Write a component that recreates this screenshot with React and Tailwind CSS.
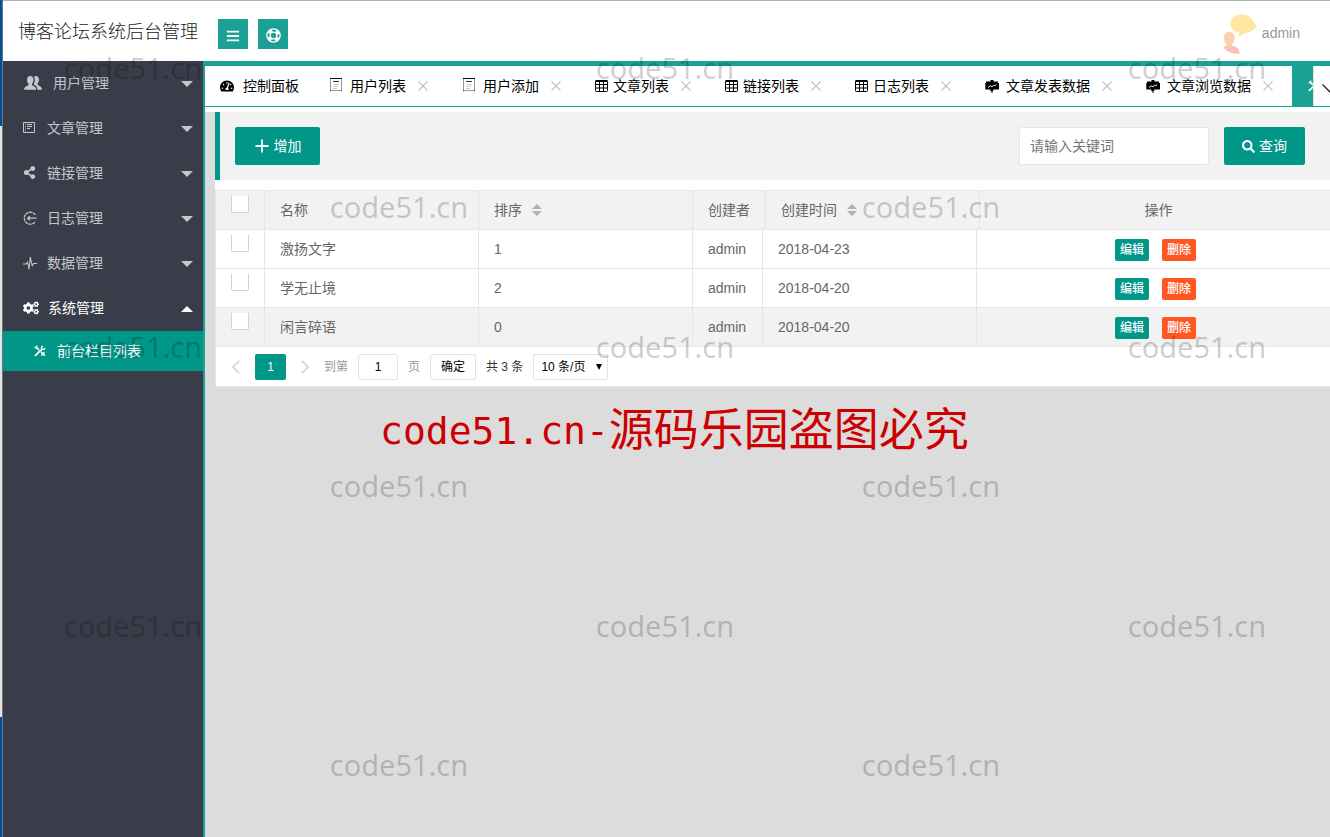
import React from "react";
import { FaBars, FaCogs, FaSearch, FaShareAlt, FaTachometerAlt } from "react-icons/fa";

const UsersIcon = () => (
  <svg viewBox="0 0 18 14" className="h-[14px] w-[18px]" fill="currentColor">
    <path d="M6.300 0C8.400 0 9.500 1.500 9.500 3.700c0 1.700-.6 3.100-1.500 4v1.200c.4.9 4.300 1.300 4.300 4.900H0c0-3.600 4.100-4 4.500-4.900V7.700C3.600 6.800 3 5.400 3 3.700 3 1.500 4.200 0 6.300 0z" />
    <path d="M10 .6C10.600.2 11.200 0 11.900 0c2 0 3.100 1.500 3.100 3.600 0 1.700-.5 3-1.400 3.900v1.300c.4.900 4.400 1.300 4.400 4.900h-4.600c0-2.700-1.500-4-3.400-4.900l-.1-.8c.5-1 .9-2.400.9-4C10.800 2.700 10.600 1.600 10 .6z" />
  </svg>
);

const RingIcon = () => (
  <svg viewBox="0 0 14 14" className="mt-[3px] h-[15px] w-[15px]" fill="none" stroke="currentColor">
    <circle cx="7" cy="7" r="6.200" strokeWidth="1.200" />
    <circle cx="7" cy="7" r="3.200" strokeWidth="1.200" />
    <circle cx="7" cy="7" r="4.700" strokeWidth="3" strokeDasharray="3.700 3.680" strokeDashoffset="-1.840" />
  </svg>
);

const DocIcon = () => (
  <svg viewBox="0 0 13 13" className="h-[13px] w-[13px]" fill="none" stroke="currentColor" strokeWidth="1">
    <path d="M.5 1.500h11v10h-11z" />
    <path d="M4 3.500h5M4 5.500h5M4 7.500h3" />
    <path d="M2.500 2v9" strokeOpacity=".4" />
  </svg>
);

const TabDocIcon = () => (
  <svg viewBox="0 0 14 14" className="mb-[2px] h-[14px] w-[14px]" fill="none" stroke="currentColor" strokeWidth="1">
    <path d="M1.500 1v12.500M12.500 1v12.500M1 12.500h12" strokeOpacity=".4" />
    <path d="M1 .5h12" strokeOpacity=".95" />
    <path d="M4 3.500h6" strokeOpacity=".8" />
    <path d="M5 6.500h5M4 8.500h5M4 10.500h4" strokeOpacity=".2" />
  </svg>
);

const LogIcon = () => (
  <svg viewBox="0 0 14 14" className="h-[14px] w-[14px]" fill="none" stroke="currentColor" strokeWidth="1.300">
    <path d="M12.300 3.800A6 6 0 1 0 12.300 10.500" strokeDasharray="3 .7" />
    <path d="M4.500 7.200h9M6.800 5.200L4.600 7.200L6.800 9.200" />
  </svg>
);

const PulseIcon = () => (
  <svg viewBox="0 0 14 14" className="h-[14px] w-[14px]" fill="none" stroke="currentColor" strokeWidth="1.100" strokeLinejoin="round">
    <path d="M0 8h3l1.500-2L6 13L7.300 1.200L9.200 10l1.200-2.500H14" />
  </svg>
);

const ToolsIcon = () => (
  <svg viewBox="0 0 12 12" className="h-[12px] w-[12px]" fill="none" stroke="currentColor" strokeWidth="1.700">
    <path d="M2.500 2.500L5 4.800M7 6.800l3.800 3.800M1 10.800L8.200 3.800" />
    <path d="M8.800.8L7.500 2.500l.4 1.700 1.700.3L11.300 3.200" strokeWidth="1.300" />
    <path d="M.7 3.300L3.300.7M7.300 10.500L10.500 7.300" strokeWidth="1.300" />
  </svg>
);

const GridIcon = () => (
  <svg viewBox="0 0 13 12" className="h-[12px] w-[13px]" fill="none" stroke="currentColor" strokeWidth="1">
    <rect x=".5" y="1" width="12" height="10.500" rx=".8" />
    <path d="M.5 1h12" strokeWidth="2" />
    <path d="M.5 4.500h12M.5 8h12M4.500 1v10.500M8.500 1v10.500" />
  </svg>
);

const BoardIcon = () => (
  <svg viewBox="0 0 14 13" className="h-[13px] w-[14px]">
    <path d="M5.500 0h3v1.500H13V3h1v6.500H8l.6 1.500H7.500v2h-1v-2H5l.6-1.500H.3V3H1V1.500h4.500z" fill="currentColor" />
    <path d="M3 7.500l2.500-1.700L7 6.800 9 5l.8.8L11.300 4.500" fill="none" stroke="#fff" strokeWidth=".9" />
  </svg>
);

const CloseIcon = () => (
  <svg viewBox="0 0 10 10" className="h-[10px] w-[10px]" fill="none" stroke="currentColor" strokeWidth="1.100">
    <path d="M.5.5l9 9M9.500.5l-9 9" />
  </svg>
);

const SortIcon = () => (
  <svg viewBox="0 0 10 12" className="h-[12px] w-[10px]" fill="#b2b2b2">
    <path d="M0 5L5 0l5 5zM0 7h10l-5 5z" />
  </svg>
);

const Avatar = () => (
  <svg viewBox="0 0 34 40" className="h-[40px] w-[34px]">
    <path d="M19 .2C26 .2 31 6 33.800 13c-4 4-8 5.800-12.500 6.200-1.500 1.500-4 3-7 3.500 1.200-1.200 2-2.600 2-4.200C10.500 17.500 7.300 14 7.300 9.800 7.300 4.500 12 .2 19 .2z" fill="#ffe7a3" />
    <path d="M6.300 17.700c3.400 0 5.200 2.600 5.200 6 0 2.800-1 4.800-2.200 6.300v4l-3 1.500-3-1.500v-4C2 28.500.9 26.500.9 23.700c0-3.400 2-6 5.400-6z" fill="#fdd0ac" />
    <path d="M0 32.800c1 .1 2.300-.3 3.300-.8 1.500 2 4 2 6 0 4.500.2 7 2.500 7.300 8C9 40 3.500 38 0 32.800z" fill="#fbc0ba" />
  </svg>
);

const menu = [
  { label: "用户管理", icon: <UsersIcon />, wide: true },
  { label: "文章管理", icon: <DocIcon /> },
  { label: "链接管理", icon: <FaShareAlt size={13} /> },
  { label: "日志管理", icon: <LogIcon /> },
  { label: "数据管理", icon: <PulseIcon /> },
];

const tabs = [
  { label: "用户列表", icon: <TabDocIcon />, wide: true },
  { label: "用户添加", icon: <TabDocIcon />, wide: true },
  { label: "文章列表", icon: <GridIcon /> },
  { label: "链接列表", icon: <GridIcon /> },
  { label: "日志列表", icon: <GridIcon /> },
  { label: "文章发表数据", icon: <BoardIcon />, wide: true },
  { label: "文章浏览数据", icon: <BoardIcon />, wide: true },
];

const rows = [
  { name: "激扬文字", order: 1, date: "2018-04-23" },
  { name: "学无止境", order: 2, date: "2018-04-20" },
  { name: "闲言碎语", order: 0, date: "2018-04-20" },
];

const cell = "border-r border-b border-[#e6e6e6] px-[15px] text-left font-normal";

const Check = ({ label }) => (
  <input
    type="checkbox"
    aria-label={label}
    className="mt-[5px] block h-[17px] w-[18px] appearance-none rounded-b-xs border border-t-0 border-[#d2d2d2] bg-white checked:bg-[#009688]"
  />
);

function Header() {
  return (
    <header className="flex h-[61px] items-center border-t border-[#b0b0b0] bg-white pl-[15px]">
      <h1 className="pt-[2px] text-[18px] font-light text-[#222]">博客论坛系统后台管理</h1>
      <div className="flex gap-[10px] pt-[6px] pl-5">
        <button aria-label="菜单" className="flex h-[30px] w-[30px] items-center justify-center bg-[#1aa094] text-white">
          <FaBars size={14} className="mt-[3px]" />
        </button>
        <button aria-label="全屏" className="flex h-[30px] w-[30px] items-center justify-center bg-[#1aa094] text-white">
          <RingIcon />
        </button>
      </div>
      <a href="#user" className="mr-[30px] ml-auto flex items-center gap-[5px] pt-1 text-sm text-[#999]">
        <span className="pt-[2px]"><Avatar /></span>
        <span>admin</span>
      </a>
    </header>
  );
}

function Sidebar() {
  return (
    <nav className="w-[202px] shrink-0 border-r-2 border-[#1aa094] bg-[#393d49] text-sm text-[#c6c7ca]">
      <ul>
        {menu.map((m) => (
          <li key={m.label}>
            <button className="flex h-[45px] w-full items-center pr-[10px] pl-5">
              <span className={m.wide ? "flex w-[30px] pb-[2px] pl-px" : "flex w-6 pb-[2px]"}>{m.icon}</span>
              <span className="pb-[2px]">{m.label}</span>
              <span className="ml-auto border-x-[6px] border-t-[6px] border-x-transparent border-t-[#c6c7ca]" />
            </button>
          </li>
        ))}
        <li>
          <button className="flex h-[45px] w-full items-center pr-[10px] pl-5 text-white">
            <span className="flex w-[25px] pb-[2px]"><FaCogs size={16} /></span>
            <span className="pb-[2px]">系统管理</span>
            <span className="ml-auto border-x-[6px] border-b-[6px] border-x-transparent border-b-white" />
          </button>
          <a href="#columns" className="flex h-10 items-center bg-[#009688] pl-[31px] text-white">
            <span className="w-[23px]"><ToolsIcon /></span>
            <span>前台栏目列表</span>
          </a>
        </li>
      </ul>
    </nav>
  );
}

function TabBar() {
  return (
    <div className="flex h-[46px] border-t-[5px] border-b border-[#1aa094] bg-white text-sm text-black">
      <div className="flex min-w-0 flex-1 overflow-hidden">
        <button className="flex shrink-0 items-center px-[15px]">
          <span className="flex w-[23px]"><FaTachometerAlt size={14} /></span>
          控制面板
        </button>
        {tabs.map((t) => (
          <div key={t.label} className="flex shrink-0 items-center pr-[19px] pl-[15px]">
            <button className="flex items-center">
              <span className={t.wide ? "flex w-[21px]" : "flex w-[18px]"}>{t.icon}</span>
              {t.label}
            </button>
            <button aria-label={"关闭" + t.label} className="pl-3 text-[#c2c2c2]"><CloseIcon /></button>
          </div>
        ))}
        <button aria-label="前台栏目列表" className="flex w-[150px] shrink-0 items-center bg-[#1aa094] pl-4 text-white">
          <ToolsIcon />
        </button>
      </div>
      <button aria-label="更多标签" className="flex w-[17px] shrink-0 items-center overflow-hidden border-l border-[#e2e2e2] pt-1 pl-2">
        <svg viewBox="0 0 16 9" className="h-[9px] w-4 shrink-0" fill="none" stroke="#222" strokeWidth="1.300">
          <path d="M.5.5L8 8L15.500.5" />
        </svg>
      </button>
    </div>
  );
}

function Toolbar() {
  return (
    <div className="flex items-center border-l-[5px] border-[#009688] bg-[#f2f2f2] py-[15px] pr-[25px] pl-[15px] text-sm">
      <button className="flex h-[38px] w-[85px] items-center justify-center gap-[5px] rounded-xs bg-[#009688] pl-px text-white">
        <svg viewBox="0 0 14 14" className="h-[14px] w-[14px]" stroke="currentColor" strokeWidth="1.800">
          <path d="M7 .5v13M.5 7h13" />
        </svg>
        增加
      </button>
      <input
        aria-label="关键词"
        placeholder="请输入关键词"
        className="ml-auto h-[38px] w-[190px] rounded-xs border border-[#e6e6e6] bg-white px-[10px] placeholder:text-[#757575]"
      />
      <button className="ml-[15px] flex h-[38px] w-[81px] items-center justify-center gap-1 rounded-xs bg-[#009688] text-white">
        <FaSearch size={13} />
        查询
      </button>
    </div>
  );
}

function DataTable() {
  return (
    <div className="overflow-hidden border-t border-l border-[#e6e6e6] text-sm text-[#666]">
      <table className="w-[calc(100%+7px)] table-fixed border-separate border-spacing-0 bg-[#f2f2f2]">
        <thead>
          <tr className="h-[39px]">
            <th className={cell + " w-[49px] align-top"}><Check label="全选" /></th>
            <th className={cell + " w-[214px]"}>名称</th>
            <th className={cell + " w-[214px]"}>
              <span className="flex items-center gap-[10px]">排序 <SortIcon /></span>
            </th>
            <th className={cell + " w-[73px]"}>创建者</th>
            <th className={cell + " w-[214px]"}>
              <span className="flex items-center gap-[10px]">创建时间 <SortIcon /></span>
            </th>
            <th className="border-b border-[#e6e6e6] text-center font-normal">操作</th>
          </tr>
        </thead>
      </table>
      <table className="w-[calc(100%+4px)] table-fixed border-separate border-spacing-0">
        <tbody>
          {rows.map((r) => (
            <tr key={r.name} className="h-[39px] bg-white last:bg-[#f2f2f2]">
              <td className={cell + " w-[49px] align-top"}><Check label={r.name} /></td>
              <td className={cell + " w-[214px]"}>{r.name}</td>
              <td className={cell + " w-[214px]"}>{r.order}</td>
              <td className={cell + " w-[70px]"}>admin</td>
              <td className={cell + " w-[214px]"}>{r.date}</td>
              <td className="border-b border-[#e6e6e6] pt-[2px]">
                <div className="flex justify-center gap-[13px] text-xs font-medium text-white">
                  <button className="h-[22px] w-[34px] rounded-xs bg-[#009688]">编辑</button>
                  <button className="h-[22px] w-[34px] rounded-xs bg-[#ff5722]">删除</button>
                </div>
              </td>
            </tr>
          ))}
        </tbody>
      </table>
      <div className="flex h-10 items-center border-b border-[#e6e6e6] bg-white pl-4 text-xs text-[#333]">
        <button aria-label="上一页" className="text-[#d2d2d2]">
          <svg viewBox="0 0 8 14" className="h-[14px] w-2" fill="none" stroke="currentColor" strokeWidth="1.600"><path d="M7.300.8L1 7l6.300 6.200" /></svg>
        </button>
        <button className="ml-[15px] h-[26px] w-[31px] rounded-xs bg-[#009688] text-white">1</button>
        <button aria-label="下一页" className="ml-[15px] text-[#d2d2d2]">
          <svg viewBox="0 0 8 14" className="h-[14px] w-2" fill="none" stroke="currentColor" strokeWidth="1.600"><path d="M.7.8L7 7L.7 13.200" /></svg>
        </button>
        <label className="ml-[15px] flex items-center gap-[10px] text-[#999]">
          到第
          <input defaultValue="1" className="h-[26px] w-10 rounded-xs border border-[#e2e2e2] bg-white text-center text-black" />
          页
        </label>
        <button className="ml-[10px] h-[26px] w-[46px] rounded-xs border border-[#e2e2e2] bg-white text-black">确定</button>
        <span className="ml-[10px]">共 3 条</span>
        <div className="relative ml-[10px]">
          <select aria-label="每页条数" className="h-[26px] w-[75px] appearance-none rounded-xs border border-[#e2e2e2] bg-white pl-[7px] text-black">
            <option>10 条/页</option>
          </select>
          <span className="pointer-events-none absolute top-[10px] right-[6px] border-x-[3px] border-t-[6px] border-x-transparent border-t-black" />
        </div>
      </div>
    </div>
  );
}

function Watermark() {
  return (
    <div aria-hidden="true" className="pointer-events-none absolute inset-0 grid grid-cols-5 grid-rows-6 font-['Noto_Sans'] text-[29px] text-black/20">
      {Array.from({ length: 30 }, (_, i) => (
        <span key={i} className="flex items-center justify-center pb-[5px]">
          {i % 2 === 0 ? "code51.cn" : ""}
        </span>
      ))}
    </div>
  );
}

export default function App() {
  return (
    <div className="relative flex min-h-screen overflow-hidden bg-[#dcdcdc] font-['Liberation_Sans','Noto_Sans_CJK_SC',sans-serif]">
      <div className="flex w-[3px] shrink-0 flex-col border-r border-[#6b7580] bg-[#00529c]">
        <div className="mt-[126px] mb-[120px] flex-1 bg-[#e4e4e2]" />
      </div>
      <div className="flex min-w-0 flex-1 flex-col">
        <Header />
        <div className="flex flex-1">
          <Sidebar />
          <main className="min-w-0 flex-1">
            <TabBar />
            <div className="border-t-[5px] border-white pl-[10px]">
              <Toolbar />
              <div className="bg-white pt-[10px]">
                <DataTable />
              </div>
            </div>
            <p className="mt-[11px] flex items-center pl-[175px] text-[45px] leading-[66px] whitespace-nowrap text-[#cc0000]">
              <span className="font-['DejaVu_Sans_Mono',monospace] text-[38px]">code51.cn-</span>
              <span>源码乐园盗图必究</span>
            </p>
          </main>
        </div>
      </div>
      <Watermark />
    </div>
  );
}
